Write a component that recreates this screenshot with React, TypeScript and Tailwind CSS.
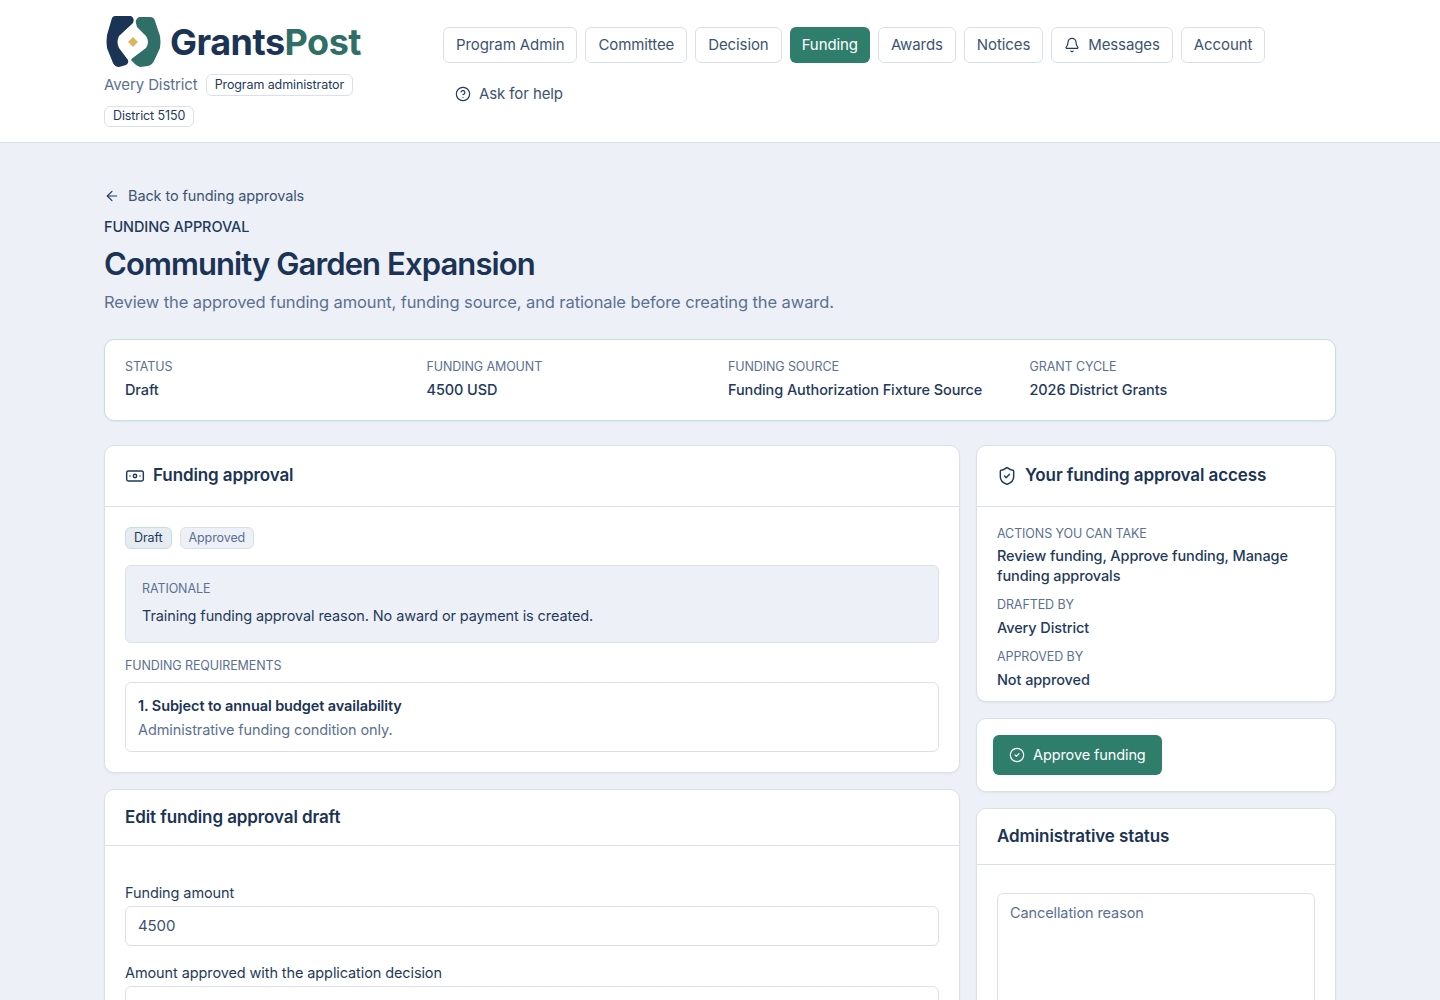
import { ArrowLeft, Banknote, Bell, CircleCheck, CircleHelp, ShieldCheck } from "lucide-react";

const navItems = ["Program Admin", "Committee", "Decision", "Funding", "Awards", "Notices", "Messages", "Account"];

const summary = [
  { label: "STATUS", value: "Draft" },
  { label: "FUNDING AMOUNT", value: "4500 USD" },
  { label: "FUNDING SOURCE", value: "Funding Authorization Fixture Source" },
  { label: "GRANT CYCLE", value: "2026 District Grants" },
];

const Logo = () => (
  <svg width="56" height="54" viewBox="0 0 56 54" className="shrink-0">
    <path
      d="M25 1 L9 1 Q7 1 6 3 L1 20 Q0 27 1 33 L7 48 Q9 52 13 52 L20 50 Q23 48 22 45 L13 33 Q10 27 13 21 L27 8 Q29 3 25 1 Z"
      fill="#1b3354"
    />
    <path
      d="M33 2 L44 2 Q48 2 49 6 L54 21 Q55 27 54 33 L48 46 Q46 50 42 51 L34 52 Q30 51 27 47 L25 45 Q26 43 28 42 L40 33 Q44 27 40 21 L31 12 Q28 4 33 2 Z"
      fill="#2f6f68"
    />
    <path d="M27 22 L32 27 L27 32 L22 27 Z" fill="#e0b35e" />
  </svg>
);

const Header = () => (
  <header className="bg-white border-b border-[#d9e0ec] h-[143px]">
    <div className="w-[1232px] mx-auto flex">
      <div className="w-[339px] shrink-0 pt-[15px]">
        <div className="flex items-center h-[54px] pl-[2px] gap-[8px]">
          <Logo />
          <div className="text-[36px] font-bold tracking-[-0.5px] leading-none text-[#1b3354] font-[Inter]">
            Grants<span className="text-[#2f6f68]">Post</span>
          </div>
        </div>
        <div className="flex flex-wrap items-center gap-x-[8px] gap-y-[9px] mt-[5px] w-[260px]">
          <span className="text-[15px] text-[#5b7092]">Avery District</span>
          <span className="h-[22px] px-[8px] flex items-center rounded-[6px] border border-[#d9e0ec] text-[12.5px] text-[#1f3a5c]">
            Program administrator
          </span>
          <span className="h-[21px] px-[8px] flex items-center rounded-[6px] border border-[#d9e0ec] text-[12.5px] text-[#1f3a5c]">
            District 5150
          </span>
        </div>
      </div>
      <nav className="flex-1 flex flex-wrap content-start gap-x-[8px] gap-y-[13px] pt-[27px]">
        {navItems.map((item) =>
          item === "Funding" ? (
            <span
              key={item}
              className="h-[36px] px-[12px] flex items-center rounded-[6px] bg-[#2f7d6b] text-white text-[15px]"
            >
              {item}
            </span>
          ) : (
            <span
              key={item}
              className="h-[36px] px-[12px] flex items-center gap-[8px] rounded-[6px] border border-[#d9e0ec] bg-white text-[15px] text-[#3c5373]"
            >
              {item === "Messages" && <Bell size={16} strokeWidth={1.75} className="text-[#1f3a5c]" />}
              {item}
            </span>
          ),
        )}
        <span className="h-[36px] px-[12px] flex items-center gap-[8px] text-[15px] text-[#3c5373]">
          <CircleHelp size={16} strokeWidth={1.75} className="text-[#1f3a5c]" />
          Ask for help
        </span>
      </nav>
    </div>
  </header>
);

const Label = ({ children }: { children: React.ReactNode }) => (
  <div className="text-[12.5px] leading-[18px] text-[#5b7092]">{children}</div>
);

const Card = ({ children }: { children: React.ReactNode }) => (
  <section className="bg-white rounded-[10px] border border-[#d9e0ec] shadow-[0_1px_2px_rgba(27,51,84,0.06)]">
    {children}
  </section>
);

const Input = ({ value }: { value: string }) => (
  <div className="h-[40px] px-[12px] flex items-center rounded-[6px] border border-[#d9e0ec] text-[15px] text-[#3c5373] bg-white">
    {value}
  </div>
);

export default function App() {
  return (
    <div className="min-h-screen bg-[#edf0f6] font-[Inter,sans-serif] text-[#1b3354] tracking-[-0.1px]">
      <Header />
      <main className="w-[1232px] mx-auto pt-[43px] pb-[40px]">
        <a className="flex items-center gap-[8px] h-[20px] text-[14.5px] text-[#3c5373]">
          <ArrowLeft size={16} strokeWidth={1.75} className="text-[#1f3a5c]" />
          Back to funding approvals
        </a>
        <div className="mt-[11px] text-[14.5px] leading-[20px] font-medium text-[#1f3a5c]">FUNDING APPROVAL</div>
        <h1 className="mt-[7px] text-[31px] leading-[40px] font-semibold tracking-[-0.9px] text-[#1b3354]">
          Community Garden Expansion
        </h1>
        <p className="mt-[6px] text-[16.5px] leading-[24px] text-[#5b7092]">
          Review the approved funding amount, funding source, and rationale before creating the award.
        </p>

        <section className="mt-[25px] h-[82px] bg-white rounded-[10px] border border-[#c3e0dc] shadow-[0_1px_2px_rgba(27,51,84,0.06)] px-[20px] py-[18px] grid grid-cols-4 gap-x-[16px]">
          {summary.map((s) => (
            <div key={s.label}>
              <Label>{s.label}</Label>
              <div className="mt-[3px] text-[14.5px] leading-[22px] font-medium text-[#1f3a5c]">{s.value}</div>
            </div>
          ))}
        </section>

        <div className="mt-[24px] grid grid-cols-[1fr_360px] gap-x-[16px] items-start">
          <div className="flex flex-col gap-[16px]">
            <Card>
              <div className="h-[61px] px-[20px] flex items-center gap-[8px] border-b border-[#d9e0ec]">
                <Banknote size={20} strokeWidth={1.75} className="text-[#1f3a5c]" />
                <h2 className="text-[17px] font-semibold">Funding approval</h2>
              </div>
              <div className="p-[20px]">
                <div className="flex gap-[8px]">
                  <span className="h-[22px] px-[8px] flex items-center rounded-[6px] border border-[#c3e0dc] bg-[#e6ecf2] text-[12.5px] text-[#1f3a5c]">
                    Draft
                  </span>
                  <span className="h-[22px] px-[8px] flex items-center rounded-[6px] border border-[#d9e0ec] bg-[#edf0f6] text-[12.5px] text-[#5b7092]">
                    Approved
                  </span>
                </div>
                <div className="mt-[16px] h-[78px] rounded-[6px] border border-[#d9e0ec] bg-[#edf0f6] px-[16px] pt-[14px]">
                  <Label>RATIONALE</Label>
                  <p className="mt-[7px] text-[14.5px] leading-[22px] text-[#1f3a5c]">
                    Training funding approval reason. No award or payment is created.
                  </p>
                </div>
                <div className="mt-[14px]">
                  <Label>FUNDING REQUIREMENTS</Label>
                </div>
                <div className="mt-[7px] h-[70px] rounded-[6px] border border-[#d9e0ec] px-[12px] pt-[12px]">
                  <div className="text-[14.5px] leading-[22px] font-semibold text-[#1b3354]">
                    1. Subject to annual budget availability
                  </div>
                  <div className="mt-[2px] text-[14.5px] leading-[22px] text-[#5b7092]">
                    Administrative funding condition only.
                  </div>
                </div>
              </div>
            </Card>
            <Card>
              <div className="h-[56px] px-[20px] flex items-center border-b border-[#d9e0ec]">
                <h2 className="text-[17px] font-semibold">Edit funding approval draft</h2>
              </div>
              <div className="px-[20px] pt-[36px] pb-[20px]">
                <div className="text-[14.5px] leading-[22px] text-[#1f3a5c]">Funding amount</div>
                <div className="mt-[2px]">
                  <Input value="4500" />
                </div>
                <div className="mt-[16px] text-[14.5px] leading-[22px] text-[#1f3a5c]">
                  Amount approved with the application decision
                </div>
                <div className="mt-[2px]">
                  <Input value="4500" />
                </div>
              </div>
            </Card>
          </div>

          <div className="flex flex-col gap-[16px]">
            <Card>
              <div className="h-[61px] px-[20px] flex items-center gap-[8px] border-b border-[#d9e0ec]">
                <ShieldCheck size={20} strokeWidth={1.75} className="text-[#1f3a5c]" />
                <h2 className="text-[17px] font-semibold">Your funding approval access</h2>
              </div>
              <div className="px-[20px] pt-[18px] pb-[10px]">
                <Label>ACTIONS YOU CAN TAKE</Label>
                <div className="mt-[3px] text-[14.5px] leading-[20px] font-medium text-[#1f3a5c]">
                  Review funding, Approve funding, Manage funding approvals
                </div>
                <div className="mt-[10px]">
                  <Label>DRAFTED BY</Label>
                </div>
                <div className="mt-[3px] text-[14.5px] leading-[22px] font-medium text-[#1f3a5c]">Avery District</div>
                <div className="mt-[9px]">
                  <Label>APPROVED BY</Label>
                </div>
                <div className="mt-[3px] text-[14.5px] leading-[22px] font-medium text-[#1f3a5c]">Not approved</div>
              </div>
            </Card>
            <Card>
              <div className="p-[16px]">
                <button className="h-[40px] px-[16px] flex items-center gap-[8px] rounded-[6px] bg-[#2f7d6b] text-[14.5px] text-white">
                  <CircleCheck size={16} strokeWidth={1.75} />
                  Approve funding
                </button>
              </div>
            </Card>
            <Card>
              <div className="h-[56px] px-[20px] flex items-center border-b border-[#d9e0ec]">
                <h2 className="text-[17px] font-semibold">Administrative status</h2>
              </div>
              <div className="px-[20px] pt-[28px] pb-[20px]">
                <div className="h-[120px] rounded-[6px] border border-[#d9e0ec] px-[12px] py-[8px] text-[14.5px] leading-[22px] text-[#5b7092]">
                  Cancellation reason
                </div>
              </div>
            </Card>
          </div>
        </div>
      </main>
    </div>
  );
}
